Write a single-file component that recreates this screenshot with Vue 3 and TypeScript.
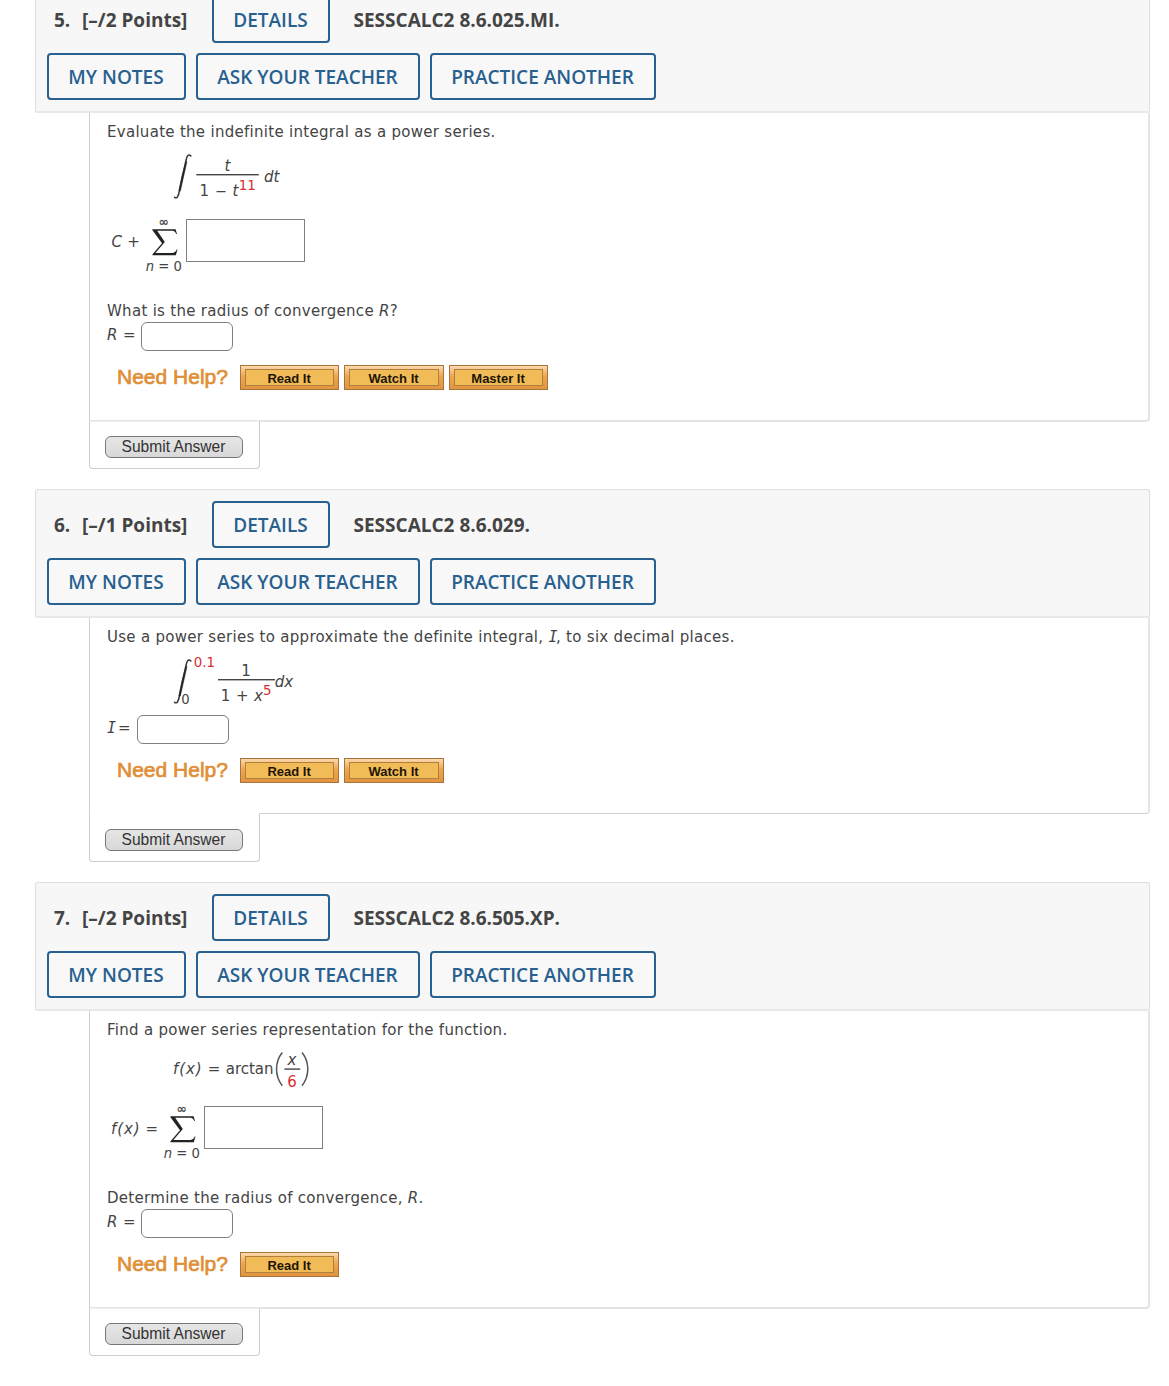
<script setup lang="ts">
interface Question {
  id: number
  points: number
  code: string
  help: string[]
  softLine: boolean
}

const questions: Question[] = [
  { id: 5, points: 2, code: 'SESSCALC2 8.6.025.MI.', help: ['Read It', 'Watch It', 'Master It'], softLine: true },
  { id: 6, points: 1, code: 'SESSCALC2 8.6.029.', help: ['Read It', 'Watch It'], softLine: false },
  { id: 7, points: 2, code: 'SESSCALC2 8.6.505.XP.', help: ['Read It'], softLine: true },
]
</script>

<template>
  <main class="page">
    <svg class="defs" aria-hidden="true">
      <symbol id="integral" viewBox="0 0 18 46" overflow="visible">
        <path d="M17 2.4 C14.6 0.4 13.2 2 12.2 7 L5.6 37.5 C4.6 43 3.2 45.6 0.8 43.8" fill="none" stroke="#333" stroke-width="1.5" stroke-linecap="round" />
        <path d="M12 8 L13.2 8 L6.6 37.5 L5 37.5 L8.2 22 Z" stroke="#333" stroke-width="0.5" />
      </symbol>
      <symbol id="sigma" viewBox="0 0 26 27" overflow="visible">
        <path d="M0.3 0.3 H23.6 L25 5 H24.3 C23.2 2.3 22 1.7 18.5 1.7 H5.2 L12.8 13 L3.4 24 H18.5 C22 24 23.6 23.2 24.8 20.4 H25.5 L23.8 26.2 H0.5 V25.3 L10 14.3 L0.3 1 Z" />
      </symbol>
    </svg>

    <section v-for="q in questions" :key="q.id" class="question">
      <header class="head">
        <div class="row">
          <span class="num">{{ q.id }}.</span>
          <span class="points">[–/{{ q.points }} Points]</span>
          <button class="btn details">DETAILS</button>
          <span class="code">{{ q.code }}</span>
        </div>
        <div class="row">
          <button class="btn notes">MY NOTES</button>
          <button class="btn ask">ASK YOUR TEACHER</button>
          <button class="btn practice">PRACTICE ANOTHER</button>
        </div>
      </header>

      <div class="body" :class="{ soft: q.softLine }">
        <template v-if="q.id === 5">
          <p>Evaluate the indefinite integral as a power series.</p>
          <svg class="math" width="240" height="70" viewBox="107 142 240 70">
            <use href="#integral" x="173.8" y="153.5" width="18" height="46" />
            <text x="224.5" y="171.3" class="it">t</text>
            <rect x="196.3" y="174" width="62.5" height="1.4" />
            <text x="199.5" y="196.3">1</text>
            <text x="215.5" y="196.3" textLength="11" lengthAdjust="spacingAndGlyphs">–</text>
            <text x="232.6" y="196.3" class="it">t</text>
            <text x="238.8" y="190.3" class="sup">11</text>
            <text x="264" y="182.4" class="it">dt</text>
          </svg>
          <div class="series">
            <svg class="math" width="79" height="80" viewBox="107 212 79 80">
              <text x="111.6" y="247" class="it">C</text>
              <text x="127.3" y="247">+</text>
              <text x="158.6" y="226" class="inf">∞</text>
              <use href="#sigma" x="152" y="229" width="26" height="27" />
              <text x="145.8" y="271.3" class="low"><tspan class="it">n</tspan> = 0</text>
            </svg>
            <input class="wide" type="text" />
          </div>
          <p class="follow">What is the radius of convergence <i>R</i>?</p>
          <label class="answer"><i>R</i><span class="eq">=</span><input type="text" /></label>
        </template>

        <template v-else-if="q.id === 6">
          <p>Use a power series to approximate the definite integral, <i class="cap-i">I</i>, to six decimal places.</p>
          <svg class="math" width="240" height="67" viewBox="107 647 240 67">
            <use href="#integral" x="173.8" y="658.5" width="18" height="46" />
            <text x="193.7" y="667.3" class="sup">0.1</text>
            <text x="181.2" y="703.8" class="low">0</text>
            <text x="241.3" y="676">1</text>
            <rect x="218" y="679" width="57" height="1.4" />
            <text x="220.8" y="700.7">1</text>
            <text x="236" y="700.7">+</text>
            <text x="254" y="700.7" class="it">x</text>
            <text x="263" y="695" class="sup">5</text>
            <text x="274.8" y="687.4" class="it">dx</text>
          </svg>
          <label class="answer six"><i class="cap-i">I</i><span class="eq">=</span><input type="text" /></label>
        </template>

        <template v-else>
          <p>Find a power series representation for the function.</p>
          <svg class="math" width="240" height="59" viewBox="107 1040 240 59">
            <text x="173" y="1074" class="it fx">f(x)</text>
            <text x="207.8" y="1074">=</text>
            <text x="225.7" y="1074">arctan</text>
            <path class="paren" d="M282.3 1052.5 C274.6 1062 274.6 1076 282.3 1085.7 M302 1052.5 C309.7 1062 309.7 1076 302 1085.7" />
            <text x="287.5" y="1065" class="it">x</text>
            <rect x="284.4" y="1068.4" width="15.8" height="1.4" />
            <text x="287.3" y="1087.2" class="red">6</text>
          </svg>
          <div class="series">
            <svg class="math" width="97" height="80" viewBox="107 1099 97 80">
              <text x="111" y="1134" class="it fx">f(x)</text>
              <text x="145.4" y="1134">=</text>
              <text x="176.6" y="1113" class="inf">∞</text>
              <use href="#sigma" x="170" y="1116" width="26" height="27" />
              <text x="163.8" y="1158.3" class="low"><tspan class="it">n</tspan> = 0</text>
            </svg>
            <input class="wide" type="text" />
          </div>
          <p class="follow">Determine the radius of convergence, <i>R</i>.</p>
          <label class="answer"><i>R</i><span class="eq">=</span><input type="text" /></label>
        </template>

        <div class="help">
          <span class="need">Need Help?</span>
          <button v-for="h in q.help" :key="h" class="gold"><span>{{ h }}</span></button>
        </div>
      </div>

      <div class="submit" :class="{ soft: q.softLine }"><button>Submit Answer</button></div>
    </section>
  </main>
</template>

<style>
body {
  margin: 0;
  background: #fff;
  overflow: hidden;
}
</style>

<style scoped>
* {
  box-sizing: border-box;
}
.page {
  height: 1386px;
  overflow: hidden;
  padding: 0 19px 0 35px;
  color: #444;
  font: 15px/20px "DejaVu Sans", Verdana, sans-serif;
}
.defs {
  display: block;
  width: 0;
  height: 0;
}
.question {
  margin-bottom: 20px;
}
.question:first-of-type {
  margin-top: -16px;
}
.head {
  display: flex;
  flex-direction: column;
  gap: 10px;
  height: 129px;
  padding: 11px 11px 0;
  background: #f7f7f7;
  border: 1px solid #dfdfdf;
  border-bottom: 2px solid #e8e8e8;
  border-radius: 3px 3px 2px 2px;
  font: 700 19px/49px "Open Sans", sans-serif;
}
.row {
  display: flex;
  height: 47px;
  gap: 10px;
}
.num {
  width: 18px;
  margin-left: 7px;
}
.points {
  width: 120px;
  white-space: nowrap;
}
.code {
  margin-left: 13.5px;
}
.btn {
  height: 47px;
  padding: 0 1px 0 0;
  border: 2px solid #28608f;
  border-radius: 4px;
  background: #f8f8f8;
  color: #28608f;
  font: 600 19px/42px "Open Sans", sans-serif;
  white-space: nowrap;
}
.details {
  width: 118px;
}
.notes {
  width: 139px;
}
.ask {
  width: 224px;
}
.practice {
  width: 226px;
}
.body {
  margin-left: 54px;
  padding: 9px 0 30px 17px;
  border: 1px solid #d0d0d0;
  border-top: 0;
  border-right: 2px solid #e4e4e4;
  border-radius: 0 0 4px 0;
}
.body.soft {
  border-bottom: 2px solid #e4e4e4;
}
p {
  height: 20px;
  margin: 0;
  letter-spacing: 0.29px;
}
.follow {
  margin-top: 9px;
}
.cap-i {
  font-family: "DejaVu Sans Mono", monospace;
  letter-spacing: -1.5px;
}
.math {
  display: block;
  flex: none;
  fill: #444;
}
.math text {
  white-space: pre;
}
.math use {
  fill: #222;
}
.it {
  font-style: italic;
}
.fx {
  letter-spacing: 0.9px;
}
.sup {
  font-size: 13.4px;
  fill: #d42f2f;
}
.red {
  fill: #d42f2f;
}
.low {
  font-size: 13.2px;
}
.inf {
  font-size: 12.5px;
  stroke: #444;
  stroke-width: 0.3;
}
.paren {
  fill: none;
  stroke: #555;
  stroke-width: 1.5;
}
.series {
  display: flex;
  height: 80px;
}
input {
  padding: 0;
  background: #fff;
  border: 1px solid #808080;
  outline: 0;
}
.wide {
  width: 119px;
  height: 43px;
  margin-top: 7px;
  border-radius: 0;
}
.answer {
  display: flex;
  height: 30px;
  line-height: 29px;
}
.answer i {
  width: 16px;
}
.answer .eq {
  width: 18px;
}
.answer input {
  width: 92px;
  height: 29px;
  margin-top: 1px;
  border-radius: 6px;
}
.six i {
  width: 11px;
}
.six .eq {
  width: 19px;
}
.help {
  display: flex;
  gap: 5.3px;
  height: 25px;
  margin-top: 14px;
  padding-left: 10px;
}
.need {
  width: 117.7px;
  color: #df8f36;
  font: 21px/23px "Liberation Sans", Arial, sans-serif;
  -webkit-text-stroke: 0.7px #df8f36;
}
.gold {
  display: flex;
  width: 99.2px;
  height: 25px;
  padding: 3px 4px;
  border: 1px solid #a9743a;
  background: linear-gradient(#fbd9ae, #eea450 45%, #e29440);
}
.gold span {
  flex: 1;
  padding-right: 1px;
  border: 1px solid #b07f3c;
  background: #f1bc58;
  color: #1d1405;
  font: bold 13px/17px "Liberation Sans", Arial, sans-serif;
  text-align: center;
}
.submit {
  position: relative;
  width: 171px;
  height: 49px;
  margin: -1px 0 0 54px;
  padding: 15px 0 0 15px;
  background: #fff;
  border: 1px solid #ccc;
  border-top-color: #fff;
  border-radius: 0 0 4px 4px;
}
.submit.soft {
  height: 48px;
  padding-top: 14px;
  border-top-color: #f0f0f0;
}
.submit button {
  display: block;
  width: 138px;
  height: 22px;
  padding: 0 1px 0 0;
  border: 1px solid #777;
  border-radius: 6px;
  background: linear-gradient(#e6e6e6, #d8d8d8);
  color: #333;
  font: 15.6px/20px "Liberation Sans", Arial, sans-serif;
}
</style>
